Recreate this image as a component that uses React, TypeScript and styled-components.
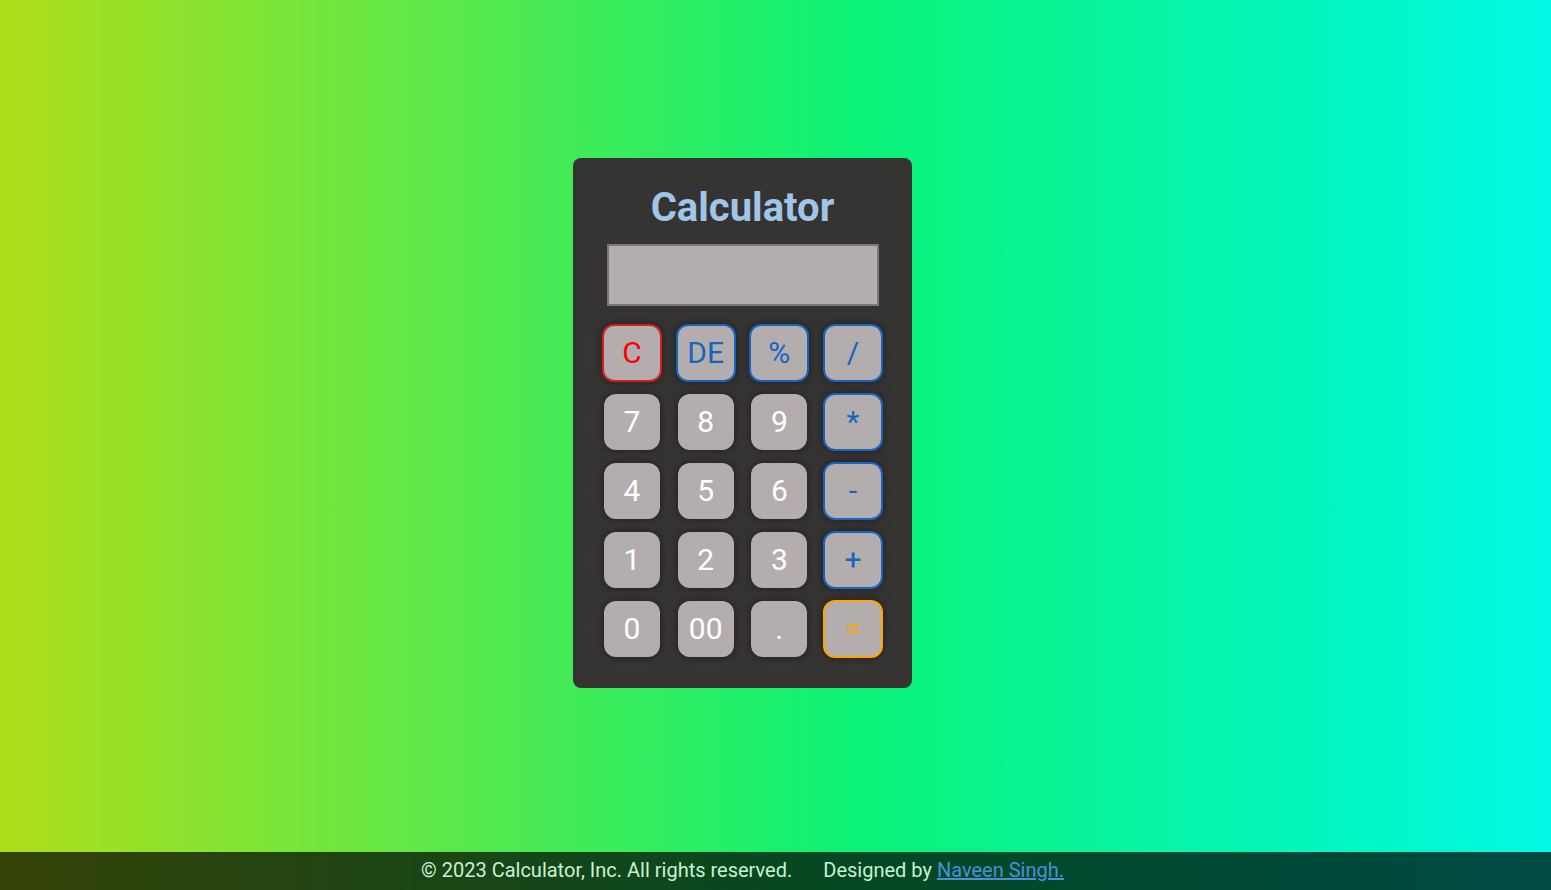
import React from 'react';
import styled, { createGlobalStyle } from 'styled-components';

const GlobalStyle = createGlobalStyle`
  html, body {
    margin: 0;
    padding: 0;
    height: 100%;
  }
  body {
    font-family: Roboto, "Liberation Sans", Arial, sans-serif;
    background: linear-gradient(90deg, #b0de1a 0%, #0cf276 55%, #00f9e4 100%);
    overflow: hidden;
  }
  #root {
    min-height: 100%;
  }
`;

const Page = styled.div`
  display: flex;
  flex-direction: column;
  min-height: 100vh;
`;

const Main = styled.main`
  flex: 1;
  display: flex;
  align-items: center;
  justify-content: center;
  padding: 0 66px 7px 0;
`;

const Card = styled.div`
  width: 277px;
  padding: 26px 31px 31px;
  background: #363433;
  border-radius: 8px;
  display: flex;
  flex-direction: column;
  align-items: center;
`;

const Title = styled.h1`
  margin: 0;
  font-size: 40px;
  font-weight: 700;
  color: #9fc5e8;
  line-height: 47px;
`;

const Display = styled.input`
  box-sizing: border-box;
  width: 272px;
  height: 62px;
  margin: 13px 0 19px;
  border: 2px solid #7a7878;
  background: #b3adad;
  font-family: inherit;
  font-size: 28px;
  color: #fff;
  text-align: right;
  padding: 0 10px;
  outline: none;
`;

const Keys = styled.div`
  display: grid;
  grid-template-columns: repeat(4, 56px);
  grid-auto-rows: 56px;
  column-gap: 17px;
  row-gap: 13px;
  width: 277px;
  justify-content: space-between;
`;

type Kind = 'num' | 'op' | 'clear' | 'equal';

const borderColor: Record<Kind, string> = {
  num: 'transparent',
  op: '#1565c0',
  clear: '#d81b1b',
  equal: '#ffa500',
};

const textColor: Record<Kind, string> = {
  num: '#ffffff',
  op: '#1565c0',
  clear: '#ff0000',
  equal: '#ffa500',
};

const Key = styled.button<{ $kind: Kind }>`
  box-sizing: border-box;
  justify-self: center;
  align-self: center;
  width: ${(p) => (p.$kind === 'num' ? '56px' : '60px')};
  height: ${(p) => (p.$kind === 'num' ? '56px' : '58px')};
  border: ${(p) => (p.$kind === 'num' ? 'none' : `2px solid ${borderColor[p.$kind]}`)};
  border-radius: 12px;
  background: #b3adad;
  color: ${(p) => textColor[p.$kind]};
  font-family: Roboto, "Liberation Sans", Arial, sans-serif;
  font-size: 30px;
  font-weight: 400;
  padding: 0;
  cursor: pointer;
  box-shadow: 0 0 12px rgba(0, 0, 0, 0.6), 0 0 28px rgba(255, 255, 255, 0.07);
`;

const Footer = styled.footer`
  height: 38px;
  box-sizing: border-box;
  padding: 0 66px 2px 0;
  background: rgba(0, 0, 0, 0.7);
  display: flex;
  align-items: center;
  justify-content: center;
  gap: 31px;
  color: #c9f2d2;
  font-size: 20px;
`;

const Link = styled.a`
  color: #4a8fd8;
  text-decoration: underline;
`;

const keys: { label: string; kind: Kind }[] = [
  { label: 'C', kind: 'clear' },
  { label: 'DE', kind: 'op' },
  { label: '%', kind: 'op' },
  { label: '/', kind: 'op' },
  { label: '7', kind: 'num' },
  { label: '8', kind: 'num' },
  { label: '9', kind: 'num' },
  { label: '*', kind: 'op' },
  { label: '4', kind: 'num' },
  { label: '5', kind: 'num' },
  { label: '6', kind: 'num' },
  { label: '-', kind: 'op' },
  { label: '1', kind: 'num' },
  { label: '2', kind: 'num' },
  { label: '3', kind: 'num' },
  { label: '+', kind: 'op' },
  { label: '0', kind: 'num' },
  { label: '00', kind: 'num' },
  { label: '.', kind: 'num' },
  { label: '=', kind: 'equal' },
];

export default function App() {
  return (
    <>
      <GlobalStyle />
      <Page>
        <Main>
          <Card>
            <Title>Calculator</Title>
            <Display readOnly value="" />
            <Keys>
              {keys.map((k) => (
                <Key key={k.label} $kind={k.kind}>
                  {k.label}
                </Key>
              ))}
            </Keys>
          </Card>
        </Main>
        <Footer>
          <span>© 2023 Calculator, Inc. All rights reserved.</span>
          <span>
            Designed by <Link href="#">Naveen Singh.</Link>
          </span>
        </Footer>
      </Page>
    </>
  );
}
